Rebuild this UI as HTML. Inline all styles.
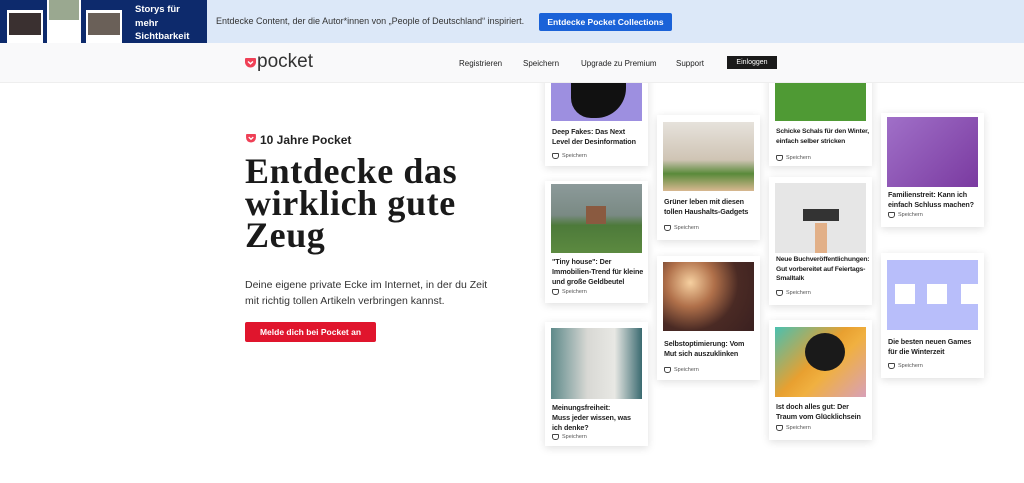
<!DOCTYPE html>
<html><head><meta charset="utf-8">
<style>
*{margin:0;padding:0;box-sizing:border-box}
body{width:1024px;height:483px;overflow:hidden;background:#fff;font-family:"Liberation Sans",sans-serif;position:relative;color:#1a1a1a}
.a{position:absolute}
.card{position:absolute;width:103px;background:#fff;box-shadow:0 2px 8px rgba(0,0,0,.13)}
.card .img{position:absolute;left:6px;width:91px}
.card .t{position:absolute;left:7px;white-space:nowrap;font-size:7.2px;letter-spacing:-0.1px;font-weight:bold;line-height:10px;color:#222}
.card .s{position:absolute;left:7px;font-size:5.5px;color:#555;display:flex;align-items:center;gap:3px}
.card .s i{display:inline-block;width:7px;height:6px;border:1px solid #444;border-radius:1px 1px 3px 3px}
</style></head><body>
<div class="card" style="left:545px;top:60px;height:106px"><div class="img" style="top:0;height:61px;background:#9d8fe0"><div class="a" style="left:20px;top:0;width:55px;height:58px;background:#111;border-radius:0 0 30px 20px"></div></div><div class="t" style="top:67px">Deep Fakes: Das Next<br>Level der Desinformation</div><div class="s" style="top:93px"><i></i>Speichern</div></div>
<div class="card" style="left:545px;top:181px;height:122px"><div class="img" style="top:3px;height:69px;background:linear-gradient(#8c9a9a,#7a8a84 45%,#4d7a3a 60%,#5c8a40)"><div class="a" style="left:35px;top:22px;width:20px;height:18px;background:#8a5a40"></div></div><div class="t" style="top:76px">"Tiny house": Der<br>Immobilien-Trend für kleine<br>und große Geldbeutel</div><div class="s" style="top:108px"><i></i>Speichern</div></div>
<div class="card" style="left:545px;top:322px;height:124px"><div class="img" style="top:6px;height:71px;background:linear-gradient(90deg,#5e8a8a,#d8d8d4 40%,#e8e8e4 70%,#3a6a70)"></div><div class="t" style="top:81px">Meinungsfreiheit:<br>Muss jeder wissen, was<br>ich denke?</div><div class="s" style="top:112px"><i></i>Speichern</div></div>

<div class="card" style="left:657px;top:115px;height:125px"><div class="img" style="top:7px;height:69px;background:linear-gradient(#e6e2dc,#cfc4b4 55%,#5a8a3a 75%,#d8b890)"></div><div class="t" style="top:82px">Grüner leben mit diesen<br>tollen Haushalts-Gadgets</div><div class="s" style="top:110px"><i></i>Speichern</div></div>
<div class="card" style="left:657px;top:256px;height:124px"><div class="img" style="top:6px;height:69px;background:radial-gradient(circle at 30% 30%,#f6d0a0,#b0704a 30%,#4a2a24 60%,#3a2020)"></div><div class="t" style="top:83px">Selbstoptimierung: Vom<br>Mut sich auszuklinken</div><div class="s" style="top:111px"><i></i>Speichern</div></div>

<div class="card" style="left:769px;top:60px;height:106px"><div class="img" style="top:0;height:61px;background:#4f9a34"></div><div class="t" style="top:67px;font-size:6.8px;letter-spacing:-0.2px">Schicke Schals für den Winter,<br>einfach selber stricken</div><div class="s" style="top:95px"><i></i>Speichern</div></div>
<div class="card" style="left:769px;top:177px;height:128px"><div class="img" style="top:6px;height:70px;background:#e6e6e6"><div class="a" style="left:28px;top:26px;width:36px;height:12px;background:#333"></div><div class="a" style="left:40px;top:40px;width:12px;height:30px;background:#e2b088"></div></div><div class="t" style="top:78px;font-size:6.8px;letter-spacing:-0.2px;line-height:9.5px">Neue Buchveröffentlichungen:<br>Gut vorbereitet auf Feiertags-<br>Smalltalk</div><div class="s" style="top:113px"><i></i>Speichern</div></div>
<div class="card" style="left:769px;top:320px;height:120px"><div class="img" style="top:7px;height:70px;background:linear-gradient(135deg,#4ac0b0,#e8a030 45%,#f0b040 60%,#d8a0b8)"><div class="a" style="left:30px;top:6px;width:40px;height:38px;border-radius:50%;background:#1a1a1a"></div></div><div class="t" style="top:82px">Ist doch alles gut: Der<br>Traum vom Glücklichsein</div><div class="s" style="top:105px"><i></i>Speichern</div></div>

<div class="card" style="left:881px;top:113px;height:114px"><div class="img" style="top:4px;height:70px;background:linear-gradient(135deg,#a070c8,#7a3aa0)"></div><div class="t" style="top:77px">Familienstreit: Kann ich<br>einfach Schluss machen?</div><div class="s" style="top:99px"><i></i>Speichern</div></div>
<div class="card" style="left:881px;top:253px;height:125px"><div class="img" style="top:7px;height:70px;background:#b8befa"><div class="a" style="left:8px;top:24px;width:20px;height:20px;background:#fff"></div><div class="a" style="left:40px;top:24px;width:20px;height:20px;background:#fff"></div><div class="a" style="left:74px;top:24px;width:17px;height:20px;background:#fff"></div></div><div class="t" style="top:84px">Die besten neuen Games<br>für die Winterzeit</div><div class="s" style="top:110px"><i></i>Speichern</div></div>

<div class="a" style="left:0;top:0;width:1024px;height:43px;background:#dce8f8"></div>
<div class="a" style="left:0;top:0;width:207px;height:43px;background:#0d2a6c"></div>
<div class="a" style="left:7px;top:10px;width:36px;height:33px;background:#fff"><div class="a" style="left:2px;top:3px;width:32px;height:22px;background:#3a3030"></div></div>
<div class="a" style="left:47px;top:0;width:34px;height:43px;background:#fff"><div class="a" style="left:2px;top:0;width:30px;height:20px;background:#9aa890"></div></div>
<div class="a" style="left:86px;top:10px;width:36px;height:33px;background:#fff"><div class="a" style="left:2px;top:3px;width:32px;height:22px;background:#6a6058"></div></div>
<div class="a" style="left:135px;top:3px;color:#fff;font-weight:bold;font-size:9.5px;line-height:13.5px">Storys für<br>mehr<br>Sichtbarkeit</div>
<div class="a" style="left:216px;top:16px;font-size:9px;color:#333">Entdecke Content, der die Autor*innen von „People of Deutschland“ inspiriert.</div>
<div class="a" style="left:539px;top:13px;width:133px;height:18px;background:#1a62d8;border-radius:2px;color:#fff;font-weight:bold;font-size:8.5px;text-align:center;line-height:18px">Entdecke Pocket Collections</div>
<div class="a" style="left:0;top:43px;width:1024px;height:40px;background:#f9f9fa;border-bottom:1px solid #eee"></div>
<svg class="a" style="left:245px;top:58px" width="11" height="10" viewBox="0 0 11 10"><path d="M1 0h9a1 1 0 0 1 1 1v3a5.5 5.5 0 0 1-11 0V1a1 1 0 0 1 1-1z" fill="#ef4056"/><path d="M3 3.5l2.5 2.3L8 3.5" stroke="#fff" stroke-width="1.4" fill="none"/></svg>
<div class="a" style="left:257px;top:51px;font-size:19px;color:#333">pocket</div>
<div class="a" style="left:459px;top:59px;font-size:8px;color:#222">Registrieren</div>
<div class="a" style="left:523px;top:59px;font-size:8px;color:#222">Speichern</div>
<div class="a" style="left:581px;top:59px;font-size:8px;color:#222">Upgrade zu Premium</div>
<div class="a" style="left:676px;top:59px;font-size:8px;color:#222">Support</div>
<div class="a" style="left:727px;top:56px;width:50px;height:13px;background:#1a1a1a;color:#fff;font-size:7px;text-align:center;line-height:13px">Einloggen</div>
<svg class="a" style="left:246px;top:134px" width="10" height="9" viewBox="0 0 11 10"><path d="M1 0h9a1 1 0 0 1 1 1v3a5.5 5.5 0 0 1-11 0V1a1 1 0 0 1 1-1z" fill="#ef4056"/><path d="M3 3.5l2.5 2.3L8 3.5" stroke="#fff" stroke-width="1.4" fill="none"/></svg>
<div class="a" style="left:260px;top:133px;font-size:12px;font-weight:bold;color:#222">10 Jahre Pocket</div>
<div class="a" style="left:245px;top:155px;font-family:'Liberation Serif',serif;font-weight:bold;font-size:36px;line-height:32px;color:#1a1a1a;letter-spacing:0.6px">Entdecke das<br>wirklich gute<br>Zeug</div>
<div class="a" style="left:245px;top:277px;font-size:10.5px;line-height:16px;color:#333">Deine eigene private Ecke im Internet, in der du Zeit<br>mit richtig tollen Artikeln verbringen kannst.</div>
<div class="a" style="left:245px;top:322px;width:131px;height:20px;background:#e0152d;border-radius:2px;color:#fff;font-weight:bold;font-size:8.5px;text-align:center;line-height:20px">Melde dich bei Pocket an</div>
</body></html>
